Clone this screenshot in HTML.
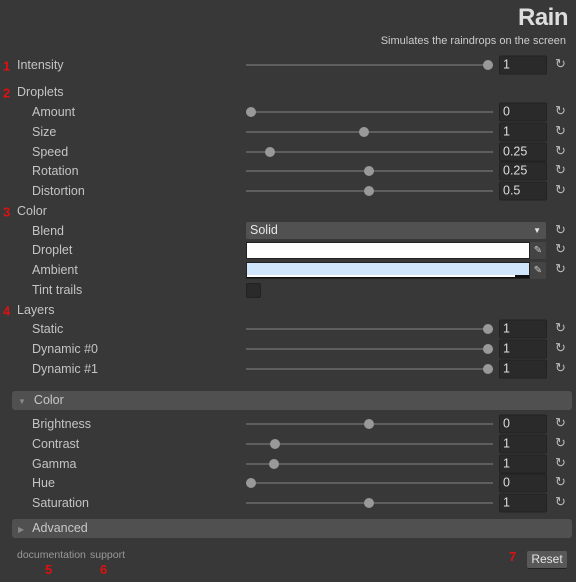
<!DOCTYPE html><html><head><style>
body{margin:0;width:576px;height:582px;background:#383838;font-family:"Liberation Sans",sans-serif;font-size:12.5px;color:#c4c4c4;position:relative;overflow:hidden}
.a{position:absolute;white-space:nowrap}
.l{position:absolute;transform:translateY(-50%)}
.tr{position:absolute;left:246px;width:247px;height:2px;background:#5e5e5e;transform:translateY(-50%)}
.th{position:absolute;width:10px;height:10px;border-radius:50%;background:#999;transform:translate(-50%,-50%)}
.in{position:absolute;left:499px;width:43px;height:17px;background:#2a2a2a;border:1px solid #222;border-radius:2px;transform:translateY(-50%);color:#ddd;padding-left:3px;line-height:17px;box-sizing:content-box}
.rs{position:absolute;left:555px;transform:translateY(-50%);font-size:13px;color:#bbb}
.n{position:absolute;left:3px;color:#e01010;font-weight:bold;transform:translateY(-50%);font-size:13px}
.fo{position:absolute;left:12px;width:560px;height:19px;background:#505050;border-radius:3px;line-height:19px;color:#c8c8c8}
</style></head><body>
<div class="a" style="right:8px;top:4px;font-size:24px;font-weight:bold;color:#ddd;letter-spacing:-0.5px">Rain</div>
<div class="a" style="right:10px;top:35px;font-size:11px;color:#ccc">Simulates the raindrops on the screen</div>

<div class="n" style="top:66px">1</div><div class="l" style="left:17px;top:65px">Intensity</div>
<div class="tr" style="top:65px"></div><div class="th" style="left:488px;top:65px"></div><div class="in" style="top:65px">1</div><div class="rs" style="top:64px">↻</div>

<div class="n" style="top:93px">2</div><div class="l" style="left:17px;top:92px">Droplets</div>

<div class="l" style="left:32px;top:112px">Amount</div><div class="tr" style="top:112px"></div><div class="th" style="left:251px;top:112px"></div><div class="in" style="top:112px">0</div><div class="rs" style="top:111px">↻</div>
<div class="l" style="left:32px;top:132px">Size</div><div class="tr" style="top:132px"></div><div class="th" style="left:364px;top:132px"></div><div class="in" style="top:132px">1</div><div class="rs" style="top:131px">↻</div>
<div class="l" style="left:32px;top:152px">Speed</div><div class="tr" style="top:152px"></div><div class="th" style="left:270px;top:152px"></div><div class="in" style="top:152px">0.25</div><div class="rs" style="top:151px">↻</div>
<div class="l" style="left:32px;top:171px">Rotation</div><div class="tr" style="top:171px"></div><div class="th" style="left:369px;top:171px"></div><div class="in" style="top:171px">0.25</div><div class="rs" style="top:170px">↻</div>
<div class="l" style="left:32px;top:191px">Distortion</div><div class="tr" style="top:191px"></div><div class="th" style="left:369px;top:191px"></div><div class="in" style="top:191px">0.5</div><div class="rs" style="top:190px">↻</div>

<div class="n" style="top:212px">3</div><div class="l" style="left:17px;top:211px">Color</div>
<div class="l" style="left:32px;top:231px">Blend</div>
<div class="a" style="left:246px;top:222px;width:300px;height:17px;background:#515151;border-radius:2px;line-height:17px;color:#e6e6e6;padding-left:4px;box-sizing:border-box">Solid<span style="position:absolute;right:5px;font-size:8px">▼</span></div><div class="rs" style="top:230px">↻</div>
<div class="l" style="left:32px;top:250px">Droplet</div>
<div class="a" style="left:246px;top:242px;width:284px;height:17px;background:#fff;border:1px solid #222;box-sizing:border-box"></div><div class="a" style="left:530px;top:242px;width:16px;height:17px;background:#444;color:#ccc;font-size:10px;text-align:center;line-height:17px">✎</div><div class="rs" style="top:249px">↻</div>
<div class="l" style="left:32px;top:270px">Ambient</div>
<div class="a" style="left:246px;top:262px;width:284px;height:17px;background:#111;border:1px solid #222;box-sizing:border-box"><div style="height:12px;background:#cfe6fb"></div><div style="height:2px;width:268px;background:#fff"></div></div><div class="a" style="left:530px;top:262px;width:16px;height:17px;background:#444;color:#ccc;font-size:10px;text-align:center;line-height:17px">✎</div><div class="rs" style="top:269px">↻</div>
<div class="l" style="left:32px;top:290px">Tint trails</div>
<div class="a" style="left:246px;top:283px;width:13px;height:13px;background:#2a2a2a;border:1px solid #222;border-radius:2px"></div>

<div class="n" style="top:311px">4</div><div class="l" style="left:17px;top:310px">Layers</div>
<div class="l" style="left:32px;top:329px">Static</div><div class="tr" style="top:329px"></div><div class="th" style="left:488px;top:329px"></div><div class="in" style="top:329px">1</div><div class="rs" style="top:328px">↻</div>
<div class="l" style="left:32px;top:349px">Dynamic #0</div><div class="tr" style="top:349px"></div><div class="th" style="left:488px;top:349px"></div><div class="in" style="top:349px">1</div><div class="rs" style="top:348px">↻</div>
<div class="l" style="left:32px;top:369px">Dynamic #1</div><div class="tr" style="top:369px"></div><div class="th" style="left:488px;top:369px"></div><div class="in" style="top:369px">1</div><div class="rs" style="top:368px">↻</div>

<div class="fo" style="top:391px"><span style="font-size:8px;color:#888;margin:0 8px 0 6px">▼</span>Color</div>
<div class="l" style="left:32px;top:424px">Brightness</div><div class="tr" style="top:424px"></div><div class="th" style="left:369px;top:424px"></div><div class="in" style="top:424px">0</div><div class="rs" style="top:423px">↻</div>
<div class="l" style="left:32px;top:444px">Contrast</div><div class="tr" style="top:444px"></div><div class="th" style="left:275px;top:444px"></div><div class="in" style="top:444px">1</div><div class="rs" style="top:443px">↻</div>
<div class="l" style="left:32px;top:464px">Gamma</div><div class="tr" style="top:464px"></div><div class="th" style="left:274px;top:464px"></div><div class="in" style="top:464px">1</div><div class="rs" style="top:463px">↻</div>
<div class="l" style="left:32px;top:483px">Hue</div><div class="tr" style="top:483px"></div><div class="th" style="left:251px;top:483px"></div><div class="in" style="top:483px">0</div><div class="rs" style="top:482px">↻</div>
<div class="l" style="left:32px;top:503px">Saturation</div><div class="tr" style="top:503px"></div><div class="th" style="left:369px;top:503px"></div><div class="in" style="top:503px">1</div><div class="rs" style="top:502px">↻</div>
<div class="fo" style="top:519px"><span style="font-size:8px;color:#888;margin:0 8px 0 6px">▶</span>Advanced</div>

<div class="a" style="left:17px;top:549px;font-size:10.5px;color:#999">documentation</div>
<div class="a" style="left:90px;top:549px;font-size:10.5px;color:#999">support</div>
<div class="a" style="left:45px;top:562px;color:#e01010;font-weight:bold;font-size:13px">5</div>
<div class="a" style="left:100px;top:562px;color:#e01010;font-weight:bold;font-size:13px">6</div>
<div class="a" style="left:509px;top:549px;color:#e01010;font-weight:bold;font-size:13px">7</div>
<div class="a" style="left:527px;top:551px;width:40px;height:17px;background:#585858;border-radius:2px;color:#e6e6e6;text-align:center;line-height:17px;font-size:12px;border-bottom:1px solid #222">Reset</div>
</body></html>
